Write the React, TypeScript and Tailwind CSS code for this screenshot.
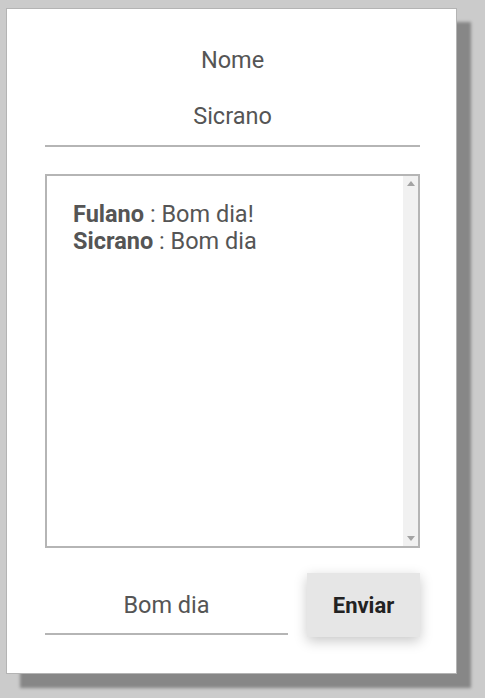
import React from "react";

const messages = [
  { name: "Fulano", text: "Bom dia!" },
  { name: "Sicrano", text: "Bom dia" },
];

export default function App() {
  return (
    <div className="h-[698px] w-full bg-[#cbcbcb] pt-[8px] pl-[6px] font-['Roboto',sans-serif]">
      <div className="w-[451px] h-[666px] bg-white border border-[#b4b4b4] shadow-[14px_14px_3px_#878787] pl-[38px] pr-[36px] pt-[38px]">
        <div className="h-[26px] leading-[26px] text-center text-[23.5px] text-[#555]">
          Nome
        </div>

        <input
          type="text"
          defaultValue="Sicrano"
          className="mt-[14px] block w-full h-[60px] border-0 border-b-2 border-[#b5b5b5] text-center text-[23.5px] text-[#555] outline-none bg-transparent"
        />

        {/* chat log */}
        <div className="mt-[27px] flex h-[374px] border-2 border-[#b5b5b5]">
          <div className="flex-1 pl-[26px] pt-[25px] text-[23.5px] leading-[27px] text-[#555]">
            {messages.map((m) => (
              <div key={m.name}>
                <span className="font-bold">{m.name}</span> : {m.text}
              </div>
            ))}
          </div>
          <div className="w-[15px] bg-[#f1f1f1] flex flex-col items-center justify-between py-[5px]">
            <svg width="8" height="5" viewBox="0 0 8 5">
              <path d="M0 5 L4 0 L8 5 Z" fill="#a3a3a3" />
            </svg>
            <svg width="8" height="5" viewBox="0 0 8 5">
              <path d="M0 0 L8 0 L4 5 Z" fill="#a3a3a3" />
            </svg>
          </div>
        </div>

        <div className="mt-[24px] flex items-start justify-between">
          <input
            type="text"
            defaultValue="Bom dia"
            className="block w-[243px] h-[63px] pt-[4px] border-0 border-b-2 border-[#b5b5b5] text-center text-[23.5px] text-[#555] outline-none bg-transparent"
          />
          <button className="w-[113px] h-[64px] mt-[1px] bg-[#e6e6e6] text-[22px] font-bold text-[#222] shadow-[0_4px_12px_rgba(0,0,0,0.22)]">
            Enviar
          </button>
        </div>
      </div>
    </div>
  );
}
